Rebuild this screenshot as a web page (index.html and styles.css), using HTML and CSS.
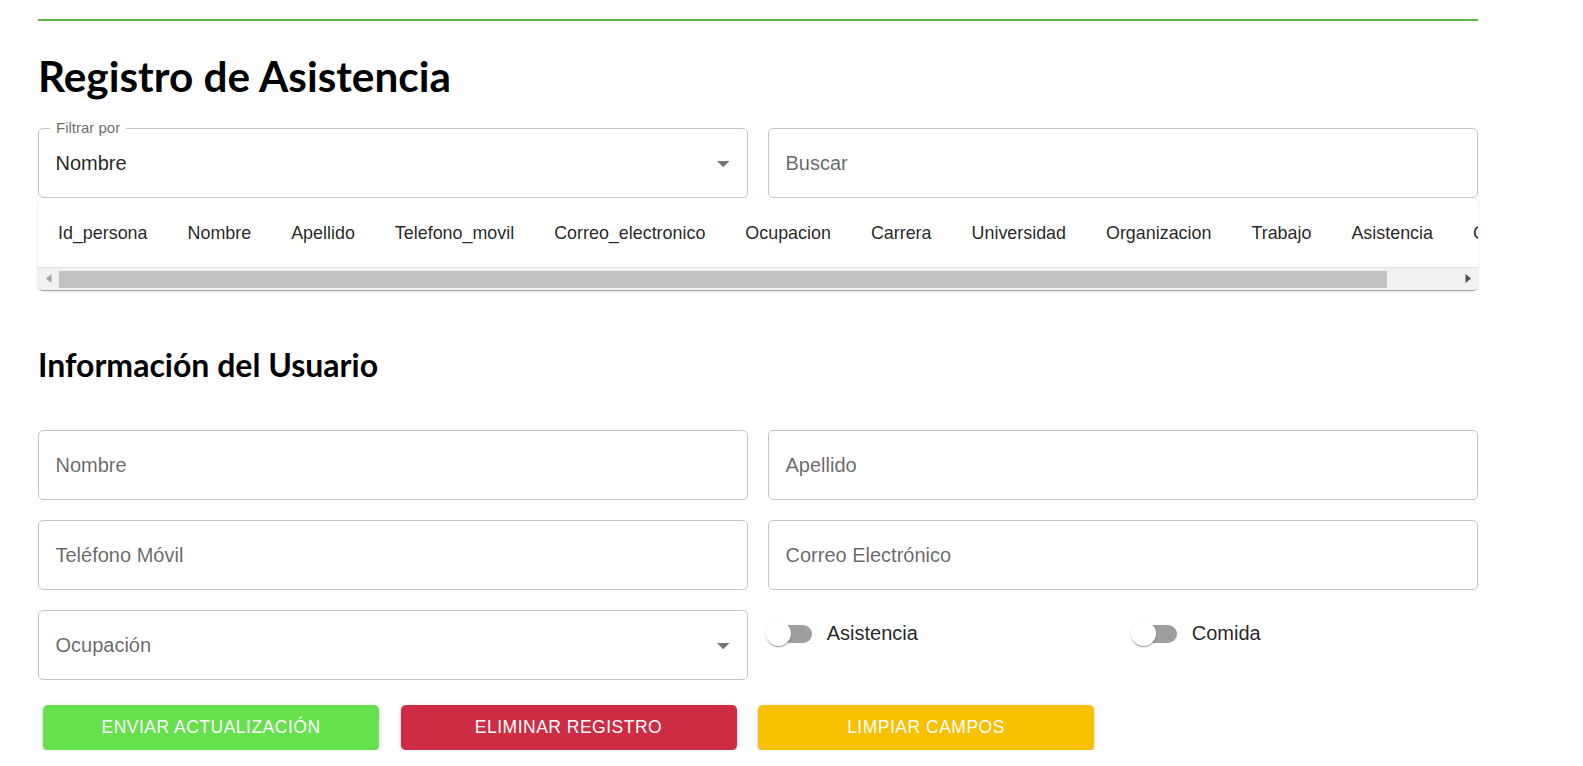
FILE: index.html
```html
<!DOCTYPE html>
<html lang="es">
<head>
<meta charset="utf-8">
<title>Registro de Asistencia</title>
<link rel="stylesheet" href="styles.css">
</head>
<body>
<div class="page">
  <div class="rule"></div>
  <h1 class="title">Registro de Asistencia</h1>

  <div class="grid2 filters">
    <div class="field">
      <span class="legend">Filtrar por</span>
      <span class="val">Nombre</span>
      <svg class="arrow" width="13" height="7" viewBox="0 0 13 7"><polygon points="0,0 12.5,0 6.25,6.25" fill="#757575"/></svg>
    </div>
    <div class="field"><span class="ph">Buscar</span></div>
  </div>

  <div class="table">
    <div class="thead">
      <div class="th">Id_persona</div>
      <div class="th">Nombre</div>
      <div class="th">Apellido</div>
      <div class="th">Telefono_movil</div>
      <div class="th">Correo_electronico</div>
      <div class="th">Ocupacion</div>
      <div class="th">Carrera</div>
      <div class="th">Universidad</div>
      <div class="th">Organizacion</div>
      <div class="th">Trabajo</div>
      <div class="th">Asistencia</div>
      <div class="th">Comida</div>
    </div>
    <div class="scroll">
      <div class="sbtn"><svg width="6" height="9" viewBox="0 0 6 9"><polygon points="5.5,0 5.5,9 0,4.5" fill="#a3a3a3"/></svg></div>
      <div class="track-h"><div class="thumb-h"></div></div>
      <div class="sbtn"><svg width="6" height="9" viewBox="0 0 6 9"><polygon points="0.5,0 0.5,9 6,4.5" fill="#505050"/></svg></div>
    </div>
  </div>

  <h2 class="subtitle">Información del Usuario</h2>

  <div class="grid2 form">
    <div class="field"><span class="ph">Nombre</span></div>
    <div class="field"><span class="ph">Apellido</span></div>
    <div class="field"><span class="ph">Teléfono Móvil</span></div>
    <div class="field"><span class="ph">Correo Electrónico</span></div>
    <div class="field">
      <span class="ph">Ocupación</span>
      <svg class="arrow" width="13" height="7" viewBox="0 0 13 7"><polygon points="0,0 12.5,0 6.25,6.25" fill="#757575"/></svg>
    </div>
    <div class="toggles">
      <label class="toggle"><span class="switch"><span class="strack"></span><span class="sthumb"></span></span><span class="tlabel">Asistencia</span></label>
      <label class="toggle"><span class="switch"><span class="strack"></span><span class="sthumb"></span></span><span class="tlabel">Comida</span></label>
    </div>
  </div>

  <div class="actions">
    <button class="btn btn-green">Enviar Actualización</button>
    <button class="btn btn-red">Eliminar Registro</button>
    <button class="btn btn-yellow">Limpiar Campos</button>
  </div>
</div>
</body>
</html>
```

FILE: styles.css
```css
* { box-sizing: border-box; }

body {
  margin: 0;
  background: #fff;
  font-family: "Liberation Sans", Arial, sans-serif;
  color: rgba(0, 0, 0, 0.87);
}

.page {
  width: 1440px;
  margin-left: 38px;
  padding-top: 19px;
}

.rule {
  height: 2px;
  background: #5cb54b;
}

.title {
  font-family: Lato, "Open Sans", sans-serif;
  font-weight: 700;
  font-size: 42.3px;
  line-height: 50px;
  margin: 30px 0 0;
  color: #000;
}

.grid2 {
  display: grid;
  grid-template-columns: 710px 710px;
  column-gap: 20px;
}

.filters {
  margin-top: 27px;
}

.field {
  position: relative;
  height: 70px;
  border: 1px solid #c4c4c4;
  border-radius: 5px;
  display: flex;
  align-items: center;
  padding: 0 16.5px;
  font-size: 20px;
}

.ph { color: rgba(0, 0, 0, 0.6); }
.val { color: rgba(0, 0, 0, 0.87); }

.legend {
  position: absolute;
  left: 11px;
  top: -10px;
  padding: 0 6px;
  background: #fff;
  font-size: 15px;
  line-height: 18px;
  color: rgba(0, 0, 0, 0.6);
}

.arrow {
  position: absolute;
  right: 17px;
  top: 32px;
}

.table {
  background: #fff;
  border-radius: 5px;
  overflow: hidden;
  box-shadow: 0 2px 1px -1px rgba(0,0,0,0.2), 0 1px 1px 0 rgba(0,0,0,0.14), 0 1px 3px 0 rgba(0,0,0,0.12);
}

.thead {
  display: flex;
  align-items: center;
  height: 70px;
  padding-top: 2px;
  border-bottom: 1px solid #e0e0e0;
  white-space: nowrap;
  overflow: hidden;
}

.th {
  flex: none;
  padding: 0 20px;
  font-size: 17.9px;
  color: rgba(0, 0, 0, 0.87);
}

.scroll {
  display: flex;
  height: 22px;
  background: #f1f1f1;
}

.sbtn {
  width: 21px;
  flex: none;
  display: flex;
  align-items: center;
  justify-content: center;
  padding-bottom: 1px;
}

.track-h {
  flex: 1;
  padding-top: 3px;
}

.thumb-h {
  width: 1328px;
  height: 17px;
  background: #c1c1c1;
}

.subtitle {
  font-family: Lato, "Open Sans", sans-serif;
  font-weight: 700;
  font-size: 32px;
  line-height: 38px;
  margin: 56px 0 0;
  color: #000;
}

.form {
  margin-top: 46px;
  row-gap: 20px;
}

.toggles {
  display: grid;
  grid-template-columns: 365px 1fr;
  align-items: start;
}

.toggle {
  display: flex;
  align-items: center;
  margin-left: -13.75px;
  height: 47.5px;
}

.switch {
  position: relative;
  flex: none;
  width: 72.5px;
  height: 47.5px;
}

.strack {
  position: absolute;
  left: 15px;
  top: 15px;
  width: 42.5px;
  height: 17.5px;
  border-radius: 9px;
  background: #9e9e9e;
}

.sthumb {
  position: absolute;
  left: 11.25px;
  top: 11.25px;
  width: 25px;
  height: 25px;
  border-radius: 50%;
  background: #fff;
  box-shadow: 0 2px 1px -1px rgba(0,0,0,0.2), 0 1px 1px 0 rgba(0,0,0,0.14), 0 1px 3px 0 rgba(0,0,0,0.12);
}

.tlabel {
  font-size: 20px;
  color: rgba(0, 0, 0, 0.87);
}

.actions {
  display: flex;
  gap: 21.5px;
  margin-top: 25px;
  padding-left: 5px;
}

.btn {
  width: 336px;
  height: 45px;
  border: none;
  border-radius: 5px;
  color: #fff;
  font-family: "Liberation Sans", Arial, sans-serif;
  font-size: 17.5px;
  letter-spacing: 0.5px;
  text-transform: uppercase;
  box-shadow: 0 3px 1px -2px rgba(0,0,0,0.2), 0 2px 2px 0 rgba(0,0,0,0.14), 0 1px 5px 0 rgba(0,0,0,0.12);
  cursor: pointer;
}

.btn-green { background: #66e04d; }
.btn-red { background: #ce2b44; }
.btn-yellow { background: #f7c000; }
```
